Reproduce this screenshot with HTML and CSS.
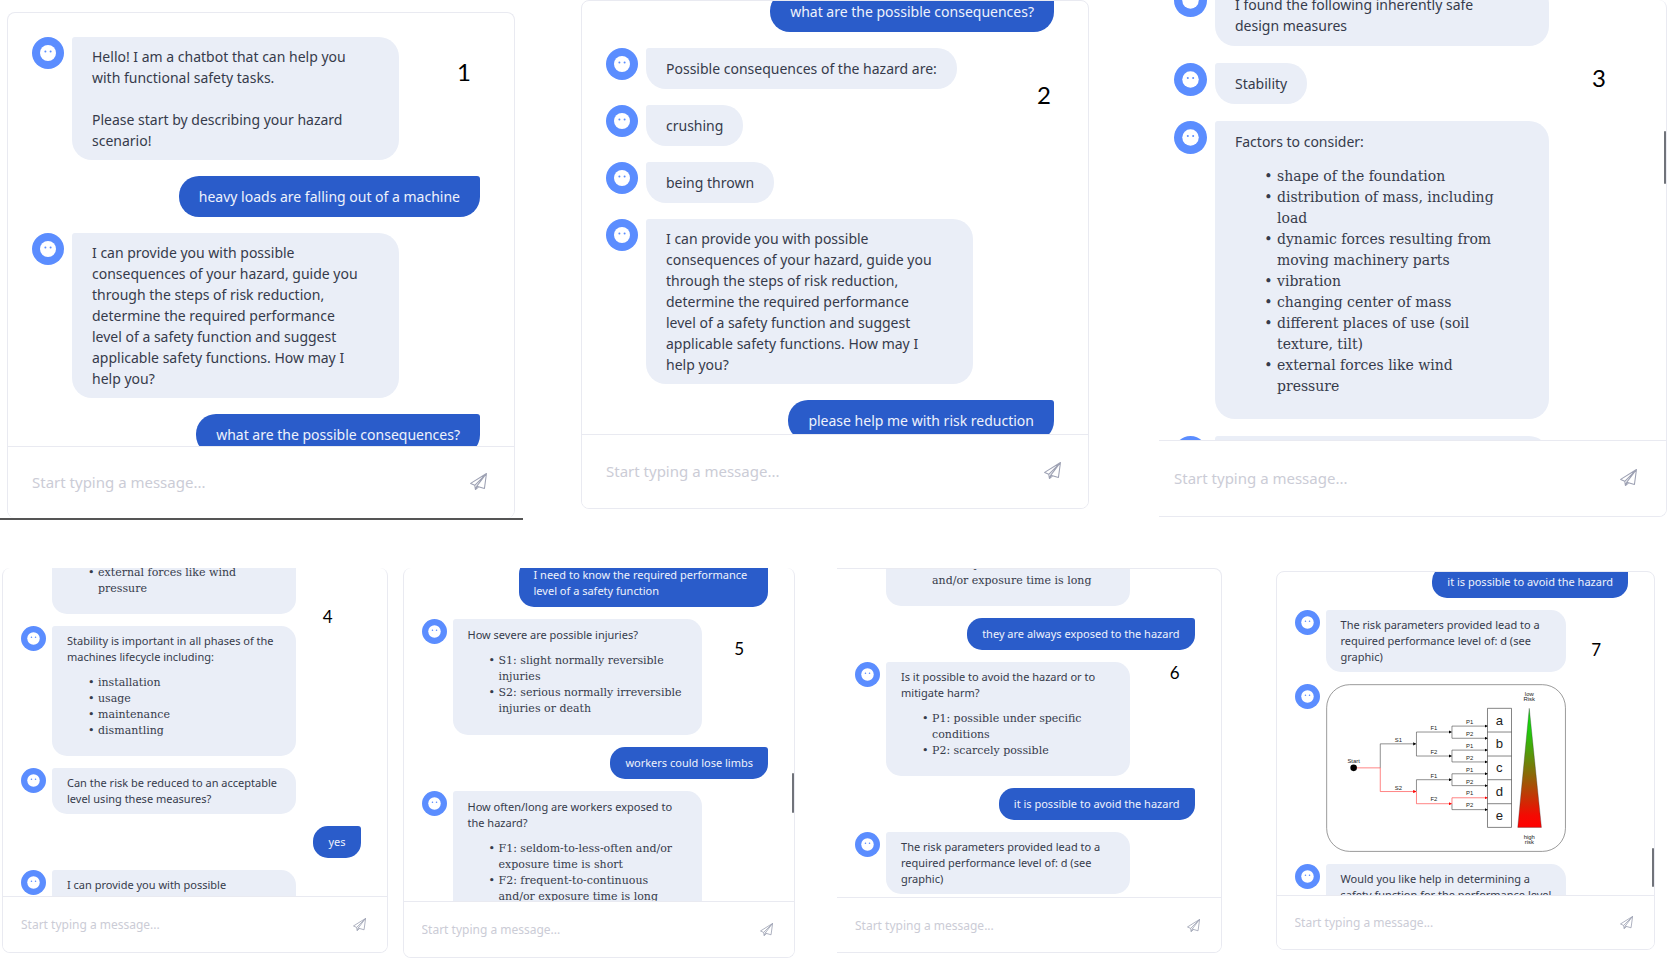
FILE: index.html
```
<!DOCTYPE html>
<html lang="en">
<head>
<meta charset="utf-8">
<title>Functional safety chatbot</title>
<link rel="stylesheet" href="styles.css">
</head>
<body>
<svg class="sprite" aria-hidden="true">
  <symbol id="bot" viewBox="0 0 32 32">
    <circle cx="16" cy="16" r="16" fill="#5b8dff"/>
    <circle cx="16" cy="16" r="8" fill="#fff"/>
    <circle cx="13.4" cy="14.5" r="1" fill="#5b8dff"/>
    <circle cx="18.6" cy="14.5" r="1" fill="#5b8dff"/>
  </symbol>
  <symbol id="plane" viewBox="0 0 16 16">
    <path d="M15.5.5.6 9.8l3.9 1.8L15.5.5 6.4 12.4l7.2 2.1L15.5.5zM4.5 11.6l.6 3.9 1.3-3.1M5.1 15.5l3-2.5" fill="none" stroke="currentColor" stroke-linejoin="round"/>
  </symbol>
</svg>
<main class="board">
  <div class="row">
    <section class="shot shot-1">
      <div class="chat">
        <span class="number">1</span>
        <div class="viewport"><div class="thread">
          <div class="msg"><svg class="avatar"><use href="#bot"/></svg><div class="bubble prose"><p>Hello! I am a chatbot that can help you with functional safety tasks.</p><p class="para">Please start by describing your hazard scenario!</p></div></div>
          <div class="msg user"><div class="bubble">heavy loads are falling out of a machine</div></div>
          <div class="msg"><svg class="avatar"><use href="#bot"/></svg><div class="bubble prose">I can provide you with possible consequences of your hazard, guide you through the steps of risk reduction, determine the required performance level of a safety function and suggest applicable safety functions. How may I help you?</div></div>
          <div class="msg user"><div class="bubble">what are the possible consequences?</div></div>
        </div></div>
        <form class="composer"><input type="text" aria-label="Message" placeholder="Start typing a message..."><button type="button" aria-label="Send"><svg><use href="#plane"/></svg></button></form>
      </div>
    </section>
    <section class="shot shot-2">
      <div class="chat">
        <span class="number">2</span>
        <div class="viewport"><div class="thread">
          <div class="msg user"><div class="bubble">what are the possible consequences?</div></div>
          <div class="msg"><svg class="avatar"><use href="#bot"/></svg><div class="bubble">Possible consequences of the hazard are:</div></div>
          <div class="msg"><svg class="avatar"><use href="#bot"/></svg><div class="bubble">crushing</div></div>
          <div class="msg"><svg class="avatar"><use href="#bot"/></svg><div class="bubble">being thrown</div></div>
          <div class="msg"><svg class="avatar"><use href="#bot"/></svg><div class="bubble prose">I can provide you with possible consequences of your hazard, guide you through the steps of risk reduction, determine the required performance level of a safety function and suggest applicable safety functions. How may I help you?</div></div>
          <div class="msg user"><div class="bubble">please help me with risk reduction</div></div>
        </div></div>
        <form class="composer"><input type="text" aria-label="Message" placeholder="Start typing a message..."><button type="button" aria-label="Send"><svg><use href="#plane"/></svg></button></form>
      </div>
    </section>
    <section class="shot shot-3">
      <div class="chat">
        <span class="number">3</span>
        <span class="thumb"></span>
        <div class="viewport"><div class="thread">
          <div class="msg"><svg class="avatar"><use href="#bot"/></svg><div class="bubble prose">I found the following inherently safe design measures</div></div>
          <div class="msg"><svg class="avatar"><use href="#bot"/></svg><div class="bubble">Stability</div></div>
          <div class="msg"><svg class="avatar"><use href="#bot"/></svg><div class="bubble prose"><p>Factors to consider:</p>
            <ul><li>shape of the foundation</li><li>distribution of mass, including load</li><li>dynamic forces resulting from moving machinery parts</li><li>vibration</li><li>changing center of mass</li><li>different places of use (soil texture, tilt)</li><li>external forces like wind pressure</li></ul></div></div>
          <div class="msg"><svg class="avatar"><use href="#bot"/></svg><div class="bubble prose blank"></div></div>
        </div></div>
        <form class="composer"><input type="text" aria-label="Message" placeholder="Start typing a message..."><button type="button" aria-label="Send"><svg><use href="#plane"/></svg></button></form>
      </div>
    </section>
  </div>
  <div class="row small">
    <section class="shot shot-4">
      <div class="chat">
        <span class="number">4</span>
        <div class="viewport"><div class="thread">
          <div class="msg"><span class="avatar"></span><div class="bubble prose blank"><ul><li>external forces like wind pressure</li></ul></div></div>
          <div class="msg"><svg class="avatar"><use href="#bot"/></svg><div class="bubble prose"><p>Stability is important in all phases of the machines lifecycle including:</p>
            <ul><li>installation</li><li>usage</li><li>maintenance</li><li>dismantling</li></ul></div></div>
          <div class="msg"><svg class="avatar"><use href="#bot"/></svg><div class="bubble prose">Can the risk be reduced to an acceptable level using these measures?</div></div>
          <div class="msg user"><div class="bubble">yes</div></div>
          <div class="msg"><svg class="avatar"><use href="#bot"/></svg><div class="bubble prose blank">I can provide you with possible</div></div>
        </div></div>
        <form class="composer"><input type="text" aria-label="Message" placeholder="Start typing a message..."><button type="button" aria-label="Send"><svg><use href="#plane"/></svg></button></form>
      </div>
    </section>
    <section class="shot shot-5">
      <div class="chat">
        <span class="number">5</span>
        <span class="thumb"></span>
        <div class="viewport"><div class="thread">
          <div class="msg user"><div class="bubble prose">I need to know the required performance level of a safety function</div></div>
          <div class="msg"><svg class="avatar"><use href="#bot"/></svg><div class="bubble prose"><p>How severe are possible injuries?</p>
            <ul><li>S1: slight normally reversible injuries</li><li>S2: serious normally irreversible injuries or death</li></ul></div></div>
          <div class="msg user"><div class="bubble">workers could lose limbs</div></div>
          <div class="msg"><svg class="avatar"><use href="#bot"/></svg><div class="bubble prose"><p>How often/long are workers exposed to the hazard?</p>
            <ul><li>F1: seldom-to-less-often and/or exposure time is short</li><li>F2: frequent-to-continuous and/or exposure time is long</li></ul></div></div>
        </div></div>
        <form class="composer"><input type="text" aria-label="Message" placeholder="Start typing a message..."><button type="button" aria-label="Send"><svg><use href="#plane"/></svg></button></form>
      </div>
    </section>
    <section class="shot shot-6">
      <div class="chat">
        <span class="number">6</span>
        <div class="viewport"><div class="thread">
          <div class="msg"><span class="avatar"></span><div class="bubble prose"><ul><li>F2: frequent-to-continuous and/or exposure time is long</li></ul></div></div>
          <div class="msg user"><div class="bubble">they are always exposed to the hazard</div></div>
          <div class="msg"><svg class="avatar"><use href="#bot"/></svg><div class="bubble prose"><p>Is it possible to avoid the hazard or to mitigate harm?</p>
            <ul><li>P1: possible under specific conditions</li><li>P2: scarcely possible</li></ul></div></div>
          <div class="msg user"><div class="bubble">it is possible to avoid the hazard</div></div>
          <div class="msg"><svg class="avatar"><use href="#bot"/></svg><div class="bubble prose">The risk parameters provided lead to a required performance level of: d (see graphic)</div></div>
        </div></div>
        <form class="composer"><input type="text" aria-label="Message" placeholder="Start typing a message..."><button type="button" aria-label="Send"><svg><use href="#plane"/></svg></button></form>
      </div>
    </section>
    <section class="shot shot-7">
      <div class="chat">
        <span class="number">7</span>
        <span class="thumb"></span>
        <div class="viewport"><div class="thread">
          <div class="msg user"><div class="bubble">it is possible to avoid the hazard</div></div>
          <div class="msg"><svg class="avatar"><use href="#bot"/></svg><div class="bubble prose">The risk parameters provided lead to a required performance level of: d (see graphic)</div></div>
          <div class="msg"><svg class="avatar"><use href="#bot"/></svg>
            <svg class="graph" viewBox="44 38 730 512" role="img" aria-label="Risk graph">
              <defs>
                <linearGradient id="risk" x1="0" y1="0" x2="0" y2="1"><stop offset="0" stop-color="#0be00b"/><stop offset=".2" stop-color="#22c80c"/><stop offset=".55" stop-color="#8a6a08"/><stop offset=".9" stop-color="#f40a02"/><stop offset="1" stop-color="#f00"/></linearGradient>
                <marker id="tip" markerUnits="userSpaceOnUse" markerWidth="10" markerHeight="10" refX="9" refY="5" orient="auto"><path d="M0 0 10 5 0 10z"/></marker>
                <marker id="tip-red" markerUnits="userSpaceOnUse" markerWidth="10" markerHeight="10" refX="9" refY="5" orient="auto"><path d="M0 0 10 5 0 10z" fill="#f00"/></marker>
              </defs>
              <rect x="46" y="40" width="726" height="507" rx="70" fill="#fff" stroke="#666" stroke-width="2"/>
              <g class="edge">
                <path d="M209 293V220H318"/><path d="M319 220V184H426"/><path d="M319 220V257H426"/><path d="M319 365V329H426"/>
                <path d="M427 184V166H535"/><path d="M427 184V203H535"/><path d="M427 257V239H535"/><path d="M427 257V275H535"/>
                <path d="M427 329V311H535"/><path d="M427 329V347H535"/><path d="M427 402V420H535"/>
              </g>
              <g class="edge hot"><path d="M128 293H209V365H318"/><path d="M319 365V402H426"/><path d="M427 402V384H535"/></g>
              <circle cx="128" cy="293" r="10"/>
              <path d="M535 112H608V474H535zM535 184H608M535 257H608M535 329H608M535 402H608" fill="none" stroke="#444" stroke-width="2"/>
              <path d="M662 112 627 474H699z" fill="url(#risk)" stroke="#333" stroke-width="1"/>
              <g class="tag">
                <text x="128" y="279">Start</text><text x="264" y="214">S1</text><text x="264" y="359">S2</text>
                <text x="372" y="178">F1</text><text x="372" y="250">F2</text><text x="372" y="323">F1</text><text x="372" y="395">F2</text>
                <text x="481" y="160">P1</text><text x="481" y="196">P2</text><text x="481" y="232">P1</text><text x="481" y="269">P2</text>
                <text x="481" y="305">P1</text><text x="481" y="341">P2</text><text x="481" y="377">P1</text><text x="481" y="413">P2</text>
                <text x="662" y="73">low</text><text x="662" y="91">Risk</text><text x="662" y="508">high</text><text x="662" y="525">risk</text>
              </g>
              <g class="level"><text x="571" y="162">a</text><text x="571" y="234">b</text><text x="571" y="307">c</text><text x="571" y="379">d</text><text x="571" y="452">e</text></g>
            </svg></div>
          <div class="msg"><svg class="avatar"><use href="#bot"/></svg><div class="bubble prose">Would you like help in determining a safety function for the performance level</div></div>
        </div></div>
        <form class="composer"><input type="text" aria-label="Message" placeholder="Start typing a message..."><button type="button" aria-label="Send"><svg><use href="#plane"/></svg></button></form>
      </div>
    </section>
  </div>
</main>
</body>
</html>
```
FILE: styles.css
```
* { box-sizing: border-box; }
body { margin: 0; background: #fff; color: #363b4b; font-family: "Noto Sans", "Open Sans", sans-serif; }
p { margin: 0; }
.sprite { display: none; }

.board { display: grid; grid-template-rows: 520fr 438fr; height: 100vh; overflow: hidden; }
.row {
  --text: 14px; --line: 21px; --pad-x: 20px; --pad-y: 10px; --prose-y: 9px; --prose-right: 35px; --gap: 16px; --fill: 73%;
  --avatar: 32px; --avatar-gap: 8px; --left: 24px; --right: 34px; --radius: 20px; --composer: 74px; --hint: 15px; --indent: 42px;
  display: flex; min-height: 0;
}
.row.small {
  --text: 11px; --line: 16px; --pad-x: 15px; --pad-y: 8px; --prose-y: 7px; --prose-right: 15px; --gap: 12px; --fill: 72%;
  --avatar: 25px; --avatar-gap: 6px; --left: 18px; --right: 26px; --radius: 15px; --composer: 56px; --hint: 12px; --indent: 31px;
  padding-top: 48px;
}
.shot { flex: 1 1 0; min-width: 0; display: flex; }
.chat { position: relative; flex: 1; min-width: 0; display: flex; flex-direction: column; border: 1px solid #e9eaf1; border-radius: 8px; overflow: hidden; }
.viewport { flex: 1; min-height: 0; overflow: hidden; }
.thread { display: flex; flex-direction: column; gap: var(--gap); padding: 0 var(--right) 0 var(--left); }

.msg { display: flex; align-items: flex-start; }
.msg.user { justify-content: flex-end; }
.avatar { flex: none; width: var(--avatar); height: var(--avatar); margin-right: var(--avatar-gap); }
.bubble {
  max-width: var(--fill); padding: var(--pad-y) var(--pad-x);
  font-size: var(--text); line-height: var(--line);
  background: #eaeef7; border-radius: 3px var(--radius) var(--radius) var(--radius);
}
.user .bubble { background: #2a5cca; color: #eef2fc; border-radius: var(--radius) 3px var(--radius) var(--radius); }
.bubble.prose { padding: var(--prose-y) var(--prose-right) var(--prose-y) var(--pad-x); }
.bubble.blank { width: var(--fill); min-height: 60px; }
.para { margin-top: var(--line); }
.bubble ul { margin: 14px 0; padding-left: var(--indent); font-family: "DejaVu Serif", serif; list-style-type: "• "; }
.small .bubble ul { margin: 10px 0; }

.composer { flex: none; height: var(--composer); display: flex; align-items: center; padding: 0 27px 2px var(--left); border-top: 1px solid #e9eaf1; background: #fff; }
.composer input { flex: 1; min-width: 0; padding: 0; border: 0; outline: 0; background: none; font: var(--hint) "Noto Sans", sans-serif; color: #363b4b; }
.composer input::placeholder { color: #cbccd6; opacity: 1; }
.composer button { display: flex; padding: 0; border: 0; background: none; color: #9da1b3; }
.composer svg { width: 17px; height: 17px; }
.small .composer { padding-right: 21px; padding-bottom: 0; }
.small .composer svg { width: 13px; height: 13px; }

.number { position: absolute; z-index: 1; color: #000; font: 24px/24px Lato, sans-serif; }
.small .number { font-size: 17px; line-height: 20px; }
.thumb { position: absolute; z-index: 1; right: 0; width: 2px; border-radius: 1px; background: #70737a; }

.shot-1 { padding: 12px 8px 0 7px; border-bottom: 2px solid #555; }
.shot-1 .chat { --composer: 72px; border-bottom: 0; }
.shot-1 .thread { padding-top: 24px; }
.shot-1 .number { right: 43px; top: 47px; }
.shot-2 { margin-left: 58px; padding-bottom: 11px; }
.shot-2 .thread { margin-top: -10px; }
.shot-2 .number { right: 37px; top: 82px; }
.shot-3 { margin-left: 70px; padding-bottom: 3px; }
.shot-3 .chat { --left: 15px; --avatar: 33px; --gap: 17px; --prose-y: 10px; --composer: 76px; border-top: 0; border-left: 0; border-radius: 0 8px 8px 0; }
.shot-3 .thread { margin-top: -16px; }
.shot-3 .bubble ul { margin-bottom: 12px; }
.shot-3 .composer { padding-right: 29px; }
.shot-3 .number { right: 60px; top: 66px; }
.shot-3 .thumb { top: 131px; height: 53px; }

.shot-4 { flex-grow: 385; margin-left: 2px; padding-bottom: 5px; }
.shot-5 { flex-grow: 392; margin-left: 15px; }
.shot-6 { flex-grow: 384; margin-left: 42px; padding-bottom: 5px; }
.shot-7 { flex-grow: 379; margin: 3px 12px 0 54px; padding-bottom: 8px; }
.shot-4 .chat, .shot-5 .chat { border-top: 0; }
.shot-4 .thread { margin-top: -20px; }
.shot-4 .number { right: 54px; top: 39px; }
.shot-5 .thread { --prose-y: 8px; margin-top: -9px; }
.shot-5 .number { right: 50px; top: 71px; }
.shot-5 .thumb { top: 205px; height: 40px; }
.shot-6 .chat { --composer: 55px; border-left: 0; border-radius: 0 8px 8px 0; }
.shot-6 .thread { margin-top: -29px; }
.shot-6 .number { right: 41px; top: 94px; }
.shot-7 .chat { --composer: 54px; --prose-right: 5px; }
.shot-7 .thread { margin-top: -6px; }
.shot-7 .number { right: 53px; top: 68px; }
.shot-7 .thumb { top: 276px; height: 39px; }

.graph { width: var(--fill); height: auto; }
.edge path { fill: none; stroke: #555; stroke-width: 2; marker-end: url(#tip); }
.edge.hot path { stroke: #f44; marker-end: url(#tip-red); }
.graph text { font-family: "Liberation Sans", Arial, sans-serif; text-anchor: middle; fill: #222; }
.tag text { font-size: 18px; }
.level text { font-size: 40px; }
```
